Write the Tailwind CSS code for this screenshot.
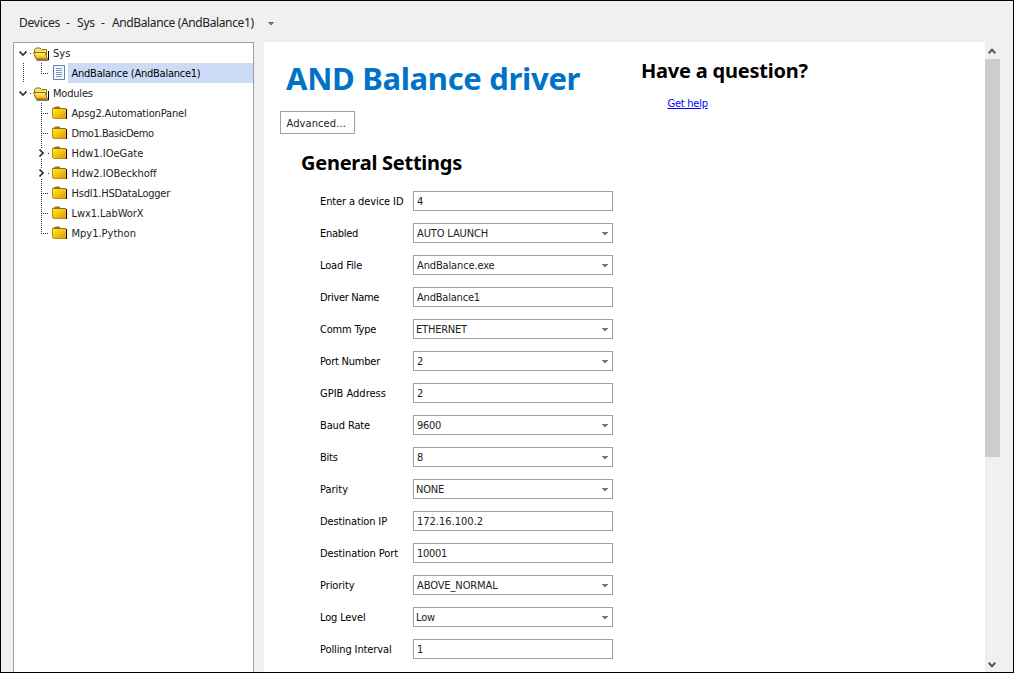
<!DOCTYPE html>
<html lang="en">
<head>
<meta charset="utf-8">
<title>Devices</title>
<script src="https://cdn.jsdelivr.net/npm/@tailwindcss/browser@4"></script>
</head>
<body class="font-['DejaVu_Sans_Condensed','Noto_Sans',sans-serif]">
<svg class="absolute h-0 w-0">
  <defs>
    <linearGradient id="gold" x1="0" y1="0" x2="1" y2="1"><stop offset="0" stop-color="#f8f010"/><stop offset="1" stop-color="#e8960c"/></linearGradient>
    <linearGradient id="flap" x1="0" y1="0" x2="0" y2="1"><stop offset="0" stop-color="#fff27a"/><stop offset="1" stop-color="#ffa60a"/></linearGradient>
    <symbol id="folder" viewBox="0 0 16 14">
      <path d="M2 3h13v10H2z" fill="#000"/>
      <path d="M0 12V2.500L1.500 1.500h1L3.500.5h4l1 1.500h5.500v10z" fill="#a0662a"/>
      <path d="M1 3h13v9H1z" fill="url(#gold)"/>
      <path d="M.5 3V11.500L1.500 12.500H14" fill="none" stroke="#c08a1c"/>
    </symbol>
    <symbol id="open" viewBox="0 0 16 14">
      <path d="M3.500 13H15.500V4" fill="none" stroke="#000"/>
      <path d="M1.500 9V2.500L3 1h4l1.500 1.500h5V10" fill="#f3e27c" stroke="#8c7a00"/>
      <path d="M.7 5.500h11.500L14.300 12H3z" fill="url(#flap)" stroke="#8a7000"/>
    </symbol>
    <symbol id="doc" viewBox="0 0 12 15">
      <path d="M.5.5h11v14H.5z" fill="#f5f8ff" stroke="#6580b4"/>
      <path d="M3 3.500h6M3 5.500h6M3 7.500h6M3 9.500h6M3 11.500h6" stroke="#8299c6"/>
    </symbol>
    <symbol id="down" viewBox="0 0 8 5"><path d="M.5.5L4 4 7.500.5" fill="none" stroke="#333" stroke-width="1.700"/></symbol>
    <symbol id="scroll" viewBox="0 0 8 6"><path d="M.7.8L4 4.200 7.300.8" fill="none" stroke="#555" stroke-width="2"/></symbol>
    <symbol id="right" viewBox="0 0 5 8"><path d="M.5.500L4 4 .5 7.500" fill="none" stroke="#333" stroke-width="1.700"/></symbol>
    <symbol id="drop" viewBox="0 0 6 3"><path d="M0 0h6v1H5v1H4v1H2V2H1V1H0z" fill="#777"/></symbol>
    <!-- Tree connectors: elbow with continuing line, last elbow, elbow beside an expander -->
    <symbol id="tee" viewBox="0 0 38 20"><path d="M27.500 0v20M29 10.500h6" stroke="#333" stroke-dasharray="1 1"/></symbol>
    <symbol id="end" viewBox="0 0 38 20"><path d="M27.500 0v11M29 10.500h6" stroke="#333" stroke-dasharray="1 1"/></symbol>
    <symbol id="gap" viewBox="0 0 38 20"><path d="M27.500 0v5M27.500 16v4M34 10.500h1" stroke="#333" stroke-dasharray="1 1"/></symbol>
  </defs>
</svg>
<div class="flex h-[673px] w-[1014px] flex-col overflow-hidden border border-black bg-[#f0f0f0]">
  <header class="flex h-[41px] shrink-0 items-center pt-[3px] pl-[18px] font-['Noto_Sans',sans-serif] text-[12px] whitespace-pre text-[#222]">
    <span class="w-[47px] tracking-[-0.25px]">Devices</span><span class="w-[11px]">-</span><span class="w-[24px] tracking-[-0.2px]">Sys</span><span class="w-[11px]">-</span><span class="w-[156px] tracking-[-0.38px]">AndBalance (AndBalance1)</span>
    <svg class="h-[3px] w-[6px]"><use href="#drop"/></svg>
  </header>
  <main class="flex min-h-0 flex-1">
    <nav class="ml-3 w-[241px] shrink-0 border border-b-0 border-[#a0a0a0] bg-white text-[11px] leading-[22px] text-[#222] whitespace-nowrap">
      <div class="flex h-5 items-center">
        <svg class="mt-px ml-[5px] h-[5px] w-2"><use href="#down"/></svg><i class="mt-px ml-[3px] h-px w-px bg-[#333]"></i>
        <svg class="mt-px ml-0.5 h-3.5 w-4"><use href="#open"/></svg><span class="mt-0.5 ml-1">Sys</span>
      </div>
      <div class="flex h-5">
        <svg class="h-5 w-[38px]"><path d="M9.500 0v20" stroke="#333" stroke-dasharray="1 1"/><use href="#end" width="38" height="20"/></svg>
        <svg class="mt-[2px] ml-[1px] h-[15px] w-3"><use href="#doc"/></svg>
        <span class="ml-[3px] flex-1 bg-[#cddcf6] pl-[3.5px] tracking-[-0.24px] text-black">AndBalance (AndBalance1)</span>
      </div>
      <div class="flex h-5 items-center">
        <svg class="mt-px ml-[5px] h-[5px] w-2"><use href="#down"/></svg><i class="mt-px ml-[3px] h-px w-px bg-[#333]"></i>
        <svg class="mt-px ml-0.5 h-3.5 w-4"><use href="#open"/></svg><span class="mt-0.5 ml-1 tracking-[-0.2px]">Modules</span>
      </div>
      <div class="flex h-5"><svg class="h-5 w-[38px]"><use href="#tee"/></svg><svg class="mt-[3px] h-3.5 w-4"><use href="#folder"/></svg><span class="ml-[3.5px] tracking-[-0.15px]">Apsg2.AutomationPanel</span></div>
      <div class="flex h-5"><svg class="h-5 w-[38px]"><use href="#tee"/></svg><svg class="mt-[3px] h-3.5 w-4"><use href="#folder"/></svg><span class="ml-[3.5px] tracking-[-0.45px]">Dmo1.BasicDemo</span></div>
      <div class="flex h-5"><svg class="h-5 w-[38px]"><use href="#gap"/><use href="#right" x="25" y="6" width="5" height="8"/></svg><svg class="mt-[3px] h-3.5 w-4"><use href="#folder"/></svg><span class="ml-[3.5px]">Hdw1.IOeGate</span></div>
      <div class="flex h-5"><svg class="h-5 w-[38px]"><use href="#gap"/><use href="#right" x="25" y="6" width="5" height="8"/></svg><svg class="mt-[3px] h-3.5 w-4"><use href="#folder"/></svg><span class="ml-[3.5px]">Hdw2.IOBeckhoff</span></div>
      <div class="flex h-5"><svg class="h-5 w-[38px]"><use href="#tee"/></svg><svg class="mt-[3px] h-3.5 w-4"><use href="#folder"/></svg><span class="ml-[3.5px] tracking-[-0.22px]">Hsdl1.HSDataLogger</span></div>
      <div class="flex h-5"><svg class="h-5 w-[38px]"><use href="#tee"/></svg><svg class="mt-[3px] h-3.5 w-4"><use href="#folder"/></svg><span class="ml-[3.5px] tracking-[-0.07px]">Lwx1.LabWorX</span></div>
      <div class="flex h-5"><svg class="h-5 w-[38px]"><use href="#end"/></svg><svg class="mt-[3px] h-3.5 w-4"><use href="#folder"/></svg><span class="ml-[3.5px]">Mpy1.Python</span></div>
    </nav>
    <div class="ml-[10px] flex w-[721px] shrink-0 bg-white">
      <section class="w-[377px] shrink-0">
        <h1 class="mt-[14px] ml-[22px] h-[45px] font-['Noto_Sans',sans-serif] text-[31px] leading-[44px] font-bold tracking-[-0.32px] whitespace-nowrap text-[#0073c8]">AND Balance driver</h1>
        <button class="mt-[10px] ml-4 block h-[23px] w-[75px] border border-[#a0a0a0] bg-white pt-px pl-[5.5px] text-left text-[11px] leading-[22px] tracking-[0.1px] text-[#222]">Advanced...</button>
        <h2 class="mt-[15px] ml-[37px] h-7 font-['Noto_Sans',sans-serif] text-[20px] leading-7 font-bold tracking-[-0.25px] text-black">General Settings</h2>
        <div class="mt-[14px] ml-14 flex flex-col gap-3 text-[11px] leading-[20px] whitespace-nowrap text-black">
          <div class="flex h-5 items-center"><label class="w-[93px] pt-0.5 tracking-[-0.1px]">Enter a device ID</label><div class="h-5 w-[200px] border border-[#a0a0a0] pl-[3px] text-[#222]">4</div></div>
          <div class="flex h-5 items-center"><label class="w-[93px] pt-0.5 tracking-[-0.28px]">Enabled</label><div class="flex h-5 w-[200px] justify-between border border-[#a0a0a0] pr-1 pl-[3px] tracking-[-0.14px] text-[#222]">AUTO LAUNCH<svg class="mt-2 h-[3px] w-[6px]"><use href="#drop"/></svg></div></div>
          <div class="flex h-5 items-center"><label class="w-[93px] pt-0.5 tracking-[-0.14px]">Load File</label><div class="flex h-5 w-[200px] justify-between border border-[#a0a0a0] pr-1 pl-[3px] tracking-[-0.14px] text-[#222]">AndBalance.exe<svg class="mt-2 h-[3px] w-[6px]"><use href="#drop"/></svg></div></div>
          <div class="flex h-5 items-center"><label class="w-[93px] pt-0.5 tracking-[-0.35px]">Driver Name</label><div class="h-5 w-[200px] border border-[#a0a0a0] pl-[3px] tracking-[-0.2px] text-[#222]">AndBalance1</div></div>
          <div class="flex h-5 items-center"><label class="w-[93px] pt-0.5 tracking-[-0.2px]">Comm Type</label><div class="flex h-5 w-[200px] justify-between border border-[#a0a0a0] pr-1 pl-[2px] tracking-[-0.2px] text-[#222]">ETHERNET<svg class="mt-2 h-[3px] w-[6px]"><use href="#drop"/></svg></div></div>
          <div class="flex h-5 items-center"><label class="w-[93px] pt-0.5 tracking-[-0.22px]">Port Number</label><div class="flex h-5 w-[200px] justify-between border border-[#a0a0a0] pr-1 pl-[3px] text-[#222]">2<svg class="mt-2 h-[3px] w-[6px]"><use href="#drop"/></svg></div></div>
          <div class="flex h-5 items-center"><label class="w-[93px] pt-0.5">GPIB Address</label><div class="h-5 w-[200px] border border-[#a0a0a0] pl-[3px] text-[#222]">2</div></div>
          <div class="flex h-5 items-center"><label class="w-[93px] pt-0.5 tracking-[-0.13px]">Baud Rate</label><div class="flex h-5 w-[200px] justify-between border border-[#a0a0a0] pr-1 pl-[3px] tracking-[-0.3px] text-[#222]">9600<svg class="mt-2 h-[3px] w-[6px]"><use href="#drop"/></svg></div></div>
          <div class="flex h-5 items-center"><label class="w-[93px] pt-0.5 tracking-[-0.25px]">Bits</label><div class="flex h-5 w-[200px] justify-between border border-[#a0a0a0] pr-1 pl-[3px] text-[#222]">8<svg class="mt-2 h-[3px] w-[6px]"><use href="#drop"/></svg></div></div>
          <div class="flex h-5 items-center"><label class="w-[93px] pt-0.5">Parity</label><div class="flex h-5 w-[200px] justify-between border border-[#a0a0a0] pr-1 pl-[2px] tracking-[-0.2px] text-[#222]">NONE<svg class="mt-2 h-[3px] w-[6px]"><use href="#drop"/></svg></div></div>
          <div class="flex h-5 items-center"><label class="w-[93px] pt-0.5 tracking-[-0.13px]">Destination IP</label><div class="h-5 w-[200px] border border-[#a0a0a0] pl-[3px] text-[#222]">172.16.100.2</div></div>
          <div class="flex h-5 items-center"><label class="w-[93px] pt-0.5 tracking-[-0.1px]">Destination Port</label><div class="h-5 w-[200px] border border-[#a0a0a0] pl-[3px] tracking-[-0.3px] text-[#222]">10001</div></div>
          <div class="flex h-5 items-center"><label class="w-[93px] pt-0.5 tracking-[-0.08px]">Priority</label><div class="flex h-5 w-[200px] justify-between border border-[#a0a0a0] pr-1 pl-[3px] tracking-[-0.1px] text-[#222]">ABOVE_NORMAL<svg class="mt-2 h-[3px] w-[6px]"><use href="#drop"/></svg></div></div>
          <div class="flex h-5 items-center"><label class="w-[93px] pt-0.5 tracking-[-0.15px]">Log Level</label><div class="flex h-5 w-[200px] justify-between border border-[#a0a0a0] pr-1 pl-[2px] tracking-[-0.15px] text-[#222]">Low<svg class="mt-2 h-[3px] w-[6px]"><use href="#drop"/></svg></div></div>
          <div class="flex h-5 items-center"><label class="w-[93px] pt-0.5 tracking-[-0.12px]">Polling Interval</label><div class="h-5 w-[200px] border border-[#a0a0a0] pl-[3px] text-[#222]">1</div></div>
        </div>
      </section>
      <aside>
        <h2 class="mt-[15px] h-7 font-['Noto_Sans',sans-serif] text-[20px] leading-7 font-bold tracking-[-0.22px] text-black">Have a question?</h2>
        <a class="mt-[10px] ml-[26.5px] block text-[11px] leading-[18px] tracking-[-0.25px] text-[#0000ff] underline">Get help</a>
      </aside>
    </div>
    <div class="flex w-[15px] shrink-0 flex-col">
      <svg class="mt-[6px] ml-[3px] h-[6px] w-2 shrink-0 rotate-180"><use href="#scroll"/></svg>
      <div class="mt-[5px] h-[398px] w-full bg-[#cdcdcd]"></div>
      <svg class="mt-auto mb-[4px] ml-[3px] h-[6px] w-2 shrink-0"><use href="#scroll"/></svg>
    </div>
  </main>
</div>
</body>
</html>
